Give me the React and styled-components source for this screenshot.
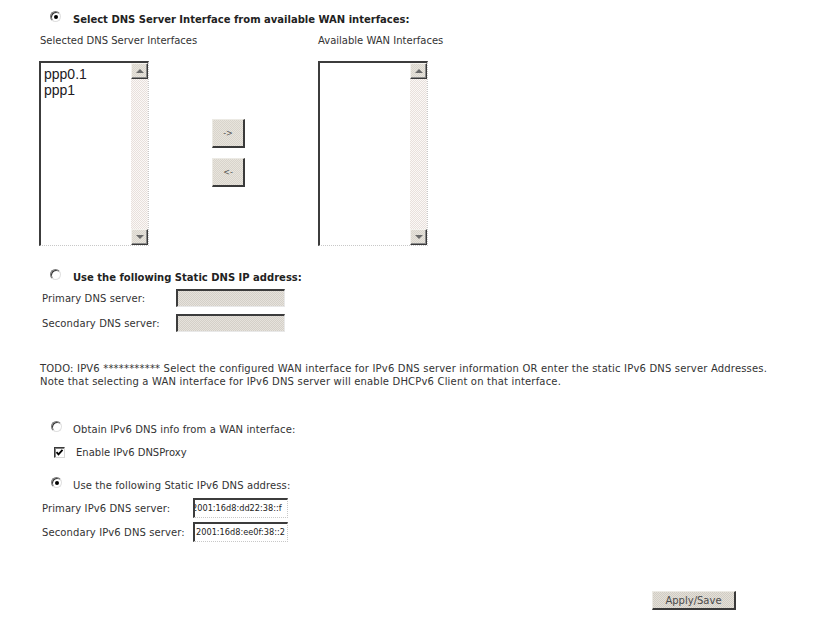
import React from 'react'
import styled, { createGlobalStyle } from 'styled-components'

const GlobalStyle = createGlobalStyle`
  html, body {
    margin: 0;
    padding: 0;
    background: #ffffff;
  }
  body {
    font-family: "DejaVu Sans", Tahoma, sans-serif;
    font-size: 10px;
    color: #333;
  }
`

// windows 2000 style dither used on buttons, scroll tracks and disabled fields
const dither = (a, b) => `repeating-conic-gradient(${a} 0 25%, ${b} 0 50%) 0 0 / 2px 2px`

const Page = styled.div`
  width: 825px;
  height: 624px;
  box-sizing: border-box;
  padding: 12px 0 0 40px;
`

const RadioRow = styled.div`
  display: flex;
  align-items: flex-start;
  gap: ${(p) => p.gap || 12}px;
  padding-left: ${(p) => p.indent || 10}px;
  margin-top: ${(p) => p.top || 0}px;
  line-height: 16px;
  font-weight: ${(p) => (p.bold ? 700 : 400)};
  color: ${(p) => (p.bold ? '#222' : '#333')};
  letter-spacing: ${(p) => (p.bold ? 0 : 0.1)}px;
`

const Radio = styled.span`
  flex: none;
  width: 11px;
  height: 11px;
  margin-top: -1px;
  box-sizing: border-box;
  border-radius: 50%;
  border: 1px solid;
  border-color: #7a7a7a #e0e0e0 #e0e0e0 #7a7a7a;
  box-shadow: inset 1px 1px 0 #3a3a3a;
  background: #fff;
  display: flex;
  align-items: center;
  justify-content: center;

  &::after {
    content: '';
    display: ${(p) => (p.checked ? 'block' : 'none')};
    width: 4px;
    height: 4px;
    border-radius: 50%;
    background: #000;
  }
`

const CheckRow = styled.div`
  display: flex;
  align-items: center;
  gap: 11px;
  padding-left: 14px;
  margin-top: ${(p) => p.top || 0}px;
  line-height: 16px;
`

const CheckBox = styled.span`
  flex: none;
  width: 11px;
  height: 11px;
  box-sizing: border-box;
  border: 1px solid;
  border-color: #3a3a3a #d8d8d8 #d8d8d8 #3a3a3a;
  box-shadow: inset 1px 1px 0 #808080;
  background: #fff;
  display: flex;
  align-items: center;
  justify-content: center;
  margin-top: -2px;
`

const ListLabels = styled.div`
  display: flex;
  margin-top: 7px;
  line-height: 12px;
`

const ColLabel = styled.div`
  width: ${(p) => p.width}px;
  flex: none;
`

const ListsRow = styled.div`
  display: flex;
  align-items: flex-start;
  margin-top: 14px;
  margin-left: -1px;
`

const ListBox = styled.div`
  width: 110px;
  height: 185px;
  flex: none;
  box-sizing: border-box;
  display: flex;
  border-top: 2px solid #3c3c3c;
  border-left: 2px solid #3c3c3c;
  border-right: 1px dotted #c8c8c8;
  border-bottom: 1px dotted #c8c8c8;
  background: #fff;
`

const ListItems = styled.div`
  flex: 1;
  padding: 3px 0 0 3px;
  font-family: "Liberation Sans", Arial, sans-serif;
  font-size: 14px;
  line-height: 16px;
  color: #221a22;
`

const ScrollBar = styled.div`
  width: 17px;
  flex: none;
  display: flex;
  flex-direction: column;
  background: ${dither('#fbf8f6', '#e8e0dc')};
`

const ScrollTrack = styled.div`
  flex: 1;
`

const ScrollButton = styled.div`
  height: 16px;
  box-sizing: border-box;
  border-top: 1px solid #f4f2ee;
  border-left: 1px solid #f4f2ee;
  border-right: 1px solid #3a3a3a;
  border-bottom: 1px solid #3a3a3a;
  box-shadow: inset -1px -1px 0 #8a8a8a;
  background: ${dither('#d8d4cc', '#e8e4dc')};
  display: flex;
  align-items: center;
  justify-content: center;

  &::after {
    content: '';
    width: 0;
    height: 0;
    border-left: 4px solid transparent;
    border-right: 4px solid transparent;
    border-${(p) => (p.down ? 'top' : 'bottom')}: 4px solid #6a6a6a;
  }
`

const ShiftButtons = styled.div`
  width: 33px;
  margin: 58px 73px 0 63px;
  display: flex;
  flex-direction: column;
  gap: 10px;
`

const ShiftButton = styled.div`
  height: 29px;
  box-sizing: border-box;
  border-top: 1px solid #eceae4;
  border-left: 1px solid #eceae4;
  border-right: 2px solid #3a3a3a;
  border-bottom: 2px solid #3a3a3a;
  background: ${dither('#d8d4cc', '#e8e4dc')};
  display: flex;
  align-items: center;
  justify-content: center;
  font-size: 8px;
  color: #555;
`

const FieldRow = styled.div`
  display: flex;
  align-items: center;
  padding-left: 2px;
  margin-top: ${(p) => p.top || 0}px;
`

const FieldLabel = styled.div`
  width: ${(p) => p.width}px;
  flex: none;
  letter-spacing: 0.1px;
`

const DisabledField = styled.div`
  width: 109px;
  height: 18px;
  box-sizing: border-box;
  border-top: 2px solid #3c3c3c;
  border-left: 2px solid #3c3c3c;
  border-right: 1px solid #e8e8e8;
  border-bottom: 1px solid #e8e8e8;
  background: ${dither('#d4d0c8', '#e6e2dc')};
`

const TextField = styled.div`
  width: 95px;
  height: 20px;
  box-sizing: border-box;
  border-top: 2px solid #3c3c3c;
  border-left: 2px solid #3c3c3c;
  border-right: 1px dotted #c8c8c8;
  border-bottom: 1px dotted #c8c8c8;
  background: #fff;
  overflow: hidden;
  white-space: nowrap;
  font-size: 8.2px;
  line-height: 16px;
  color: #222;
  padding-left: 1px;
  text-indent: ${(p) => p.shift || 0}px;
`

const Note = styled.p`
  margin: 30px 0 0 0;
  line-height: 13px;
  white-space: nowrap;
  letter-spacing: 0.18px;
`

const ButtonBar = styled.div`
  display: flex;
  justify-content: flex-end;
  padding-right: 89px;
  margin-top: 49px;
`

const SaveButton = styled.div`
  width: 84px;
  height: 19px;
  box-sizing: border-box;
  border-top: 1px solid #eceae4;
  border-left: 1px solid #eceae4;
  border-right: 2px solid #3a3a3a;
  border-bottom: 2px solid #3a3a3a;
  background: ${dither('#d0ccc4', '#e4e0d8')};
  display: flex;
  align-items: center;
  justify-content: center;
  font-size: 10px;
  color: #4a4a4a;
`

const Check = () => (
  <svg width="9" height="9" viewBox="0 0 9 9">
    <path d="M1.5 4.2 L3.5 6.4 L7.5 1.8" fill="none" stroke="#000" strokeWidth="1.8" />
  </svg>
)

const SelectList = ({ items }) => (
  <ListBox>
    <ListItems>
      {items.map((it) => (
        <div key={it}>{it}</div>
      ))}
    </ListItems>
    <ScrollBar>
      <ScrollButton />
      <ScrollTrack />
      <ScrollButton down />
    </ScrollBar>
  </ListBox>
)

export default function App() {
  return (
    <Page>
      <GlobalStyle />

      <RadioRow bold indent={10} gap={12}>
        <Radio checked />
        <span>Select DNS Server Interface from available WAN interfaces:</span>
      </RadioRow>

      <ListLabels>
        <ColLabel width={278}>Selected DNS Server Interfaces</ColLabel>
        <ColLabel width={200}>Available WAN Interfaces</ColLabel>
      </ListLabels>

      <ListsRow>
        <SelectList items={['ppp0.1', 'ppp1']} />
        <ShiftButtons>
          <ShiftButton>-&gt;</ShiftButton>
          <ShiftButton>&lt;-</ShiftButton>
        </ShiftButtons>
        <SelectList items={[]} />
      </ListsRow>

      <RadioRow bold indent={10} gap={12} top={24}>
        <Radio />
        <span>Use the following Static DNS IP address:</span>
      </RadioRow>

      <FieldRow top={3}>
        <FieldLabel width={134}>Primary DNS server:</FieldLabel>
        <DisabledField />
      </FieldRow>
      <FieldRow top={7}>
        <FieldLabel width={134}>Secondary DNS server:</FieldLabel>
        <DisabledField />
      </FieldRow>

      <Note>
        TODO: IPV6 *********** Select the configured WAN interface for IPv6 DNS server information OR enter the static IPv6 DNS server Addresses.
        <br />
        Note that selecting a WAN interface for IPv6 DNS server will enable DHCPv6 Client on that interface.
      </Note>

      <RadioRow indent={11} gap={11} top={34}>
        <Radio />
        <span>Obtain IPv6 DNS info from a WAN interface:</span>
      </RadioRow>

      <CheckRow top={7}>
        <CheckBox>
          <Check />
        </CheckBox>
        <span>Enable IPv6 DNSProxy</span>
      </CheckRow>

      <RadioRow indent={11} gap={11} top={17}>
        <Radio checked />
        <span>Use the following Static IPv6 DNS address:</span>
      </RadioRow>

      <FieldRow top={4}>
        <FieldLabel width={151}>Primary IPv6 DNS server:</FieldLabel>
        <TextField shift={-4}>2001:16d8:dd22:38::f</TextField>
      </FieldRow>
      <FieldRow top={4}>
        <FieldLabel width={151}>Secondary IPv6 DNS server:</FieldLabel>
        <TextField>2001:16d8:ee0f:38::2</TextField>
      </FieldRow>

      <ButtonBar>
        <SaveButton>Apply/Save</SaveButton>
      </ButtonBar>
    </Page>
  )
}
